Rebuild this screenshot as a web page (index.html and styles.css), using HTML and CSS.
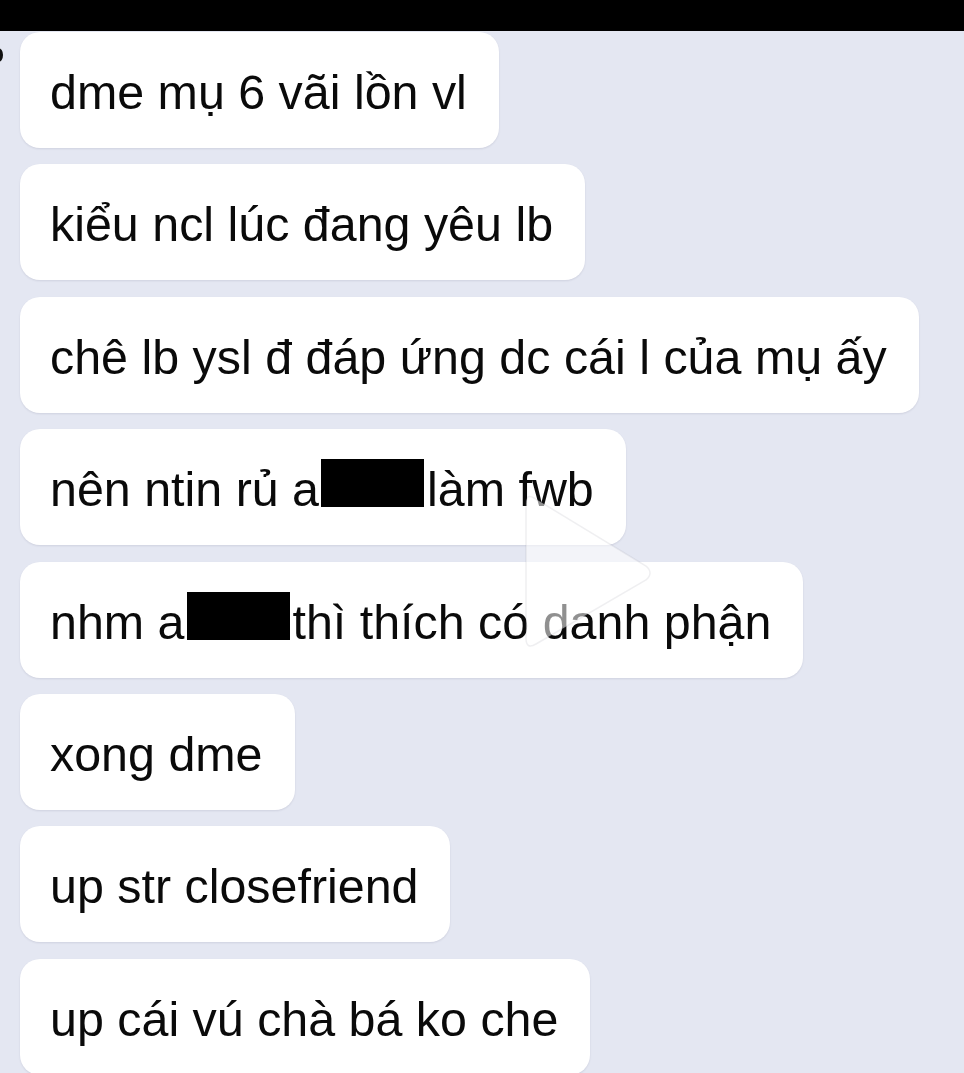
FILE: index.html
```html
<!DOCTYPE html>
<html lang="vi">
<head>
<meta charset="utf-8">
<title>Chat</title>
<link rel="stylesheet" href="styles.css">
</head>
<body>
<div class="topbar"></div>
<div class="edge-dot"></div>
<main class="thread">
  <div class="bubble">dme mụ 6 vãi lồn vl</div>
  <div class="bubble">kiểu ncl lúc đang yêu lb</div>
  <div class="bubble">chê lb ysl đ đáp ứng dc cái l của mụ ấy</div>
  <div class="bubble">nên ntin rủ a<span class="redact"></span>làm fwb</div>
  <div class="bubble">nhm a<span class="redact"></span>thì thích có danh phận</div>
  <div class="bubble">xong dme</div>
  <div class="bubble">up str closefriend</div>
  <div class="bubble">up cái vú chà bá ko che</div>
</main>
<svg class="play" width="140" height="170" viewBox="0 0 140 170">
  <path d="M14 10 Q6 5 6 16 L6 150 Q6 162 16 156 L126 92 Q134 85 126 78 Z" fill="rgba(255,255,255,0.55)" stroke="rgba(120,120,140,0.12)" stroke-width="1.5"/>
</svg>
</body>
</html>
```

FILE: styles.css
```css
html, body {
  margin: 0;
  padding: 0;
}
body {
  background: #e4e7f2;
  font-family: "Liberation Sans", Arial, sans-serif;
  color: #0a0a0a;
  width: 964px;
  height: 1073px;
  overflow: hidden;
  position: relative;
}
.topbar {
  height: 31px;
  background: #000;
}
.edge-dot {
  position: absolute;
  left: -6px;
  top: 48px;
  width: 9px;
  height: 14px;
  border-radius: 50%;
  background: #111;
}
.thread {
  display: flex;
  flex-direction: column;
  align-items: flex-start;
  gap: 16.4px;
  padding: 1px 0 0 20px;
}
.bubble {
  box-sizing: border-box;
  height: 116px;
  display: flex;
  align-items: center;
  padding: 4px 32px 0 30px;
  background: #fff;
  border-radius: 20px;
  box-shadow: 0 1px 2px rgba(60, 60, 90, 0.12);
  font-size: 48.4px;
  white-space: nowrap;
}
.redact {
  display: inline-block;
  width: 103px;
  height: 48px;
  background: #000;
  margin: 0 3px 0 2px;
  align-self: center;
  transform: translateY(-6px);
}
.play {
  position: absolute;
  left: 520px;
  top: 488px;
}
```
